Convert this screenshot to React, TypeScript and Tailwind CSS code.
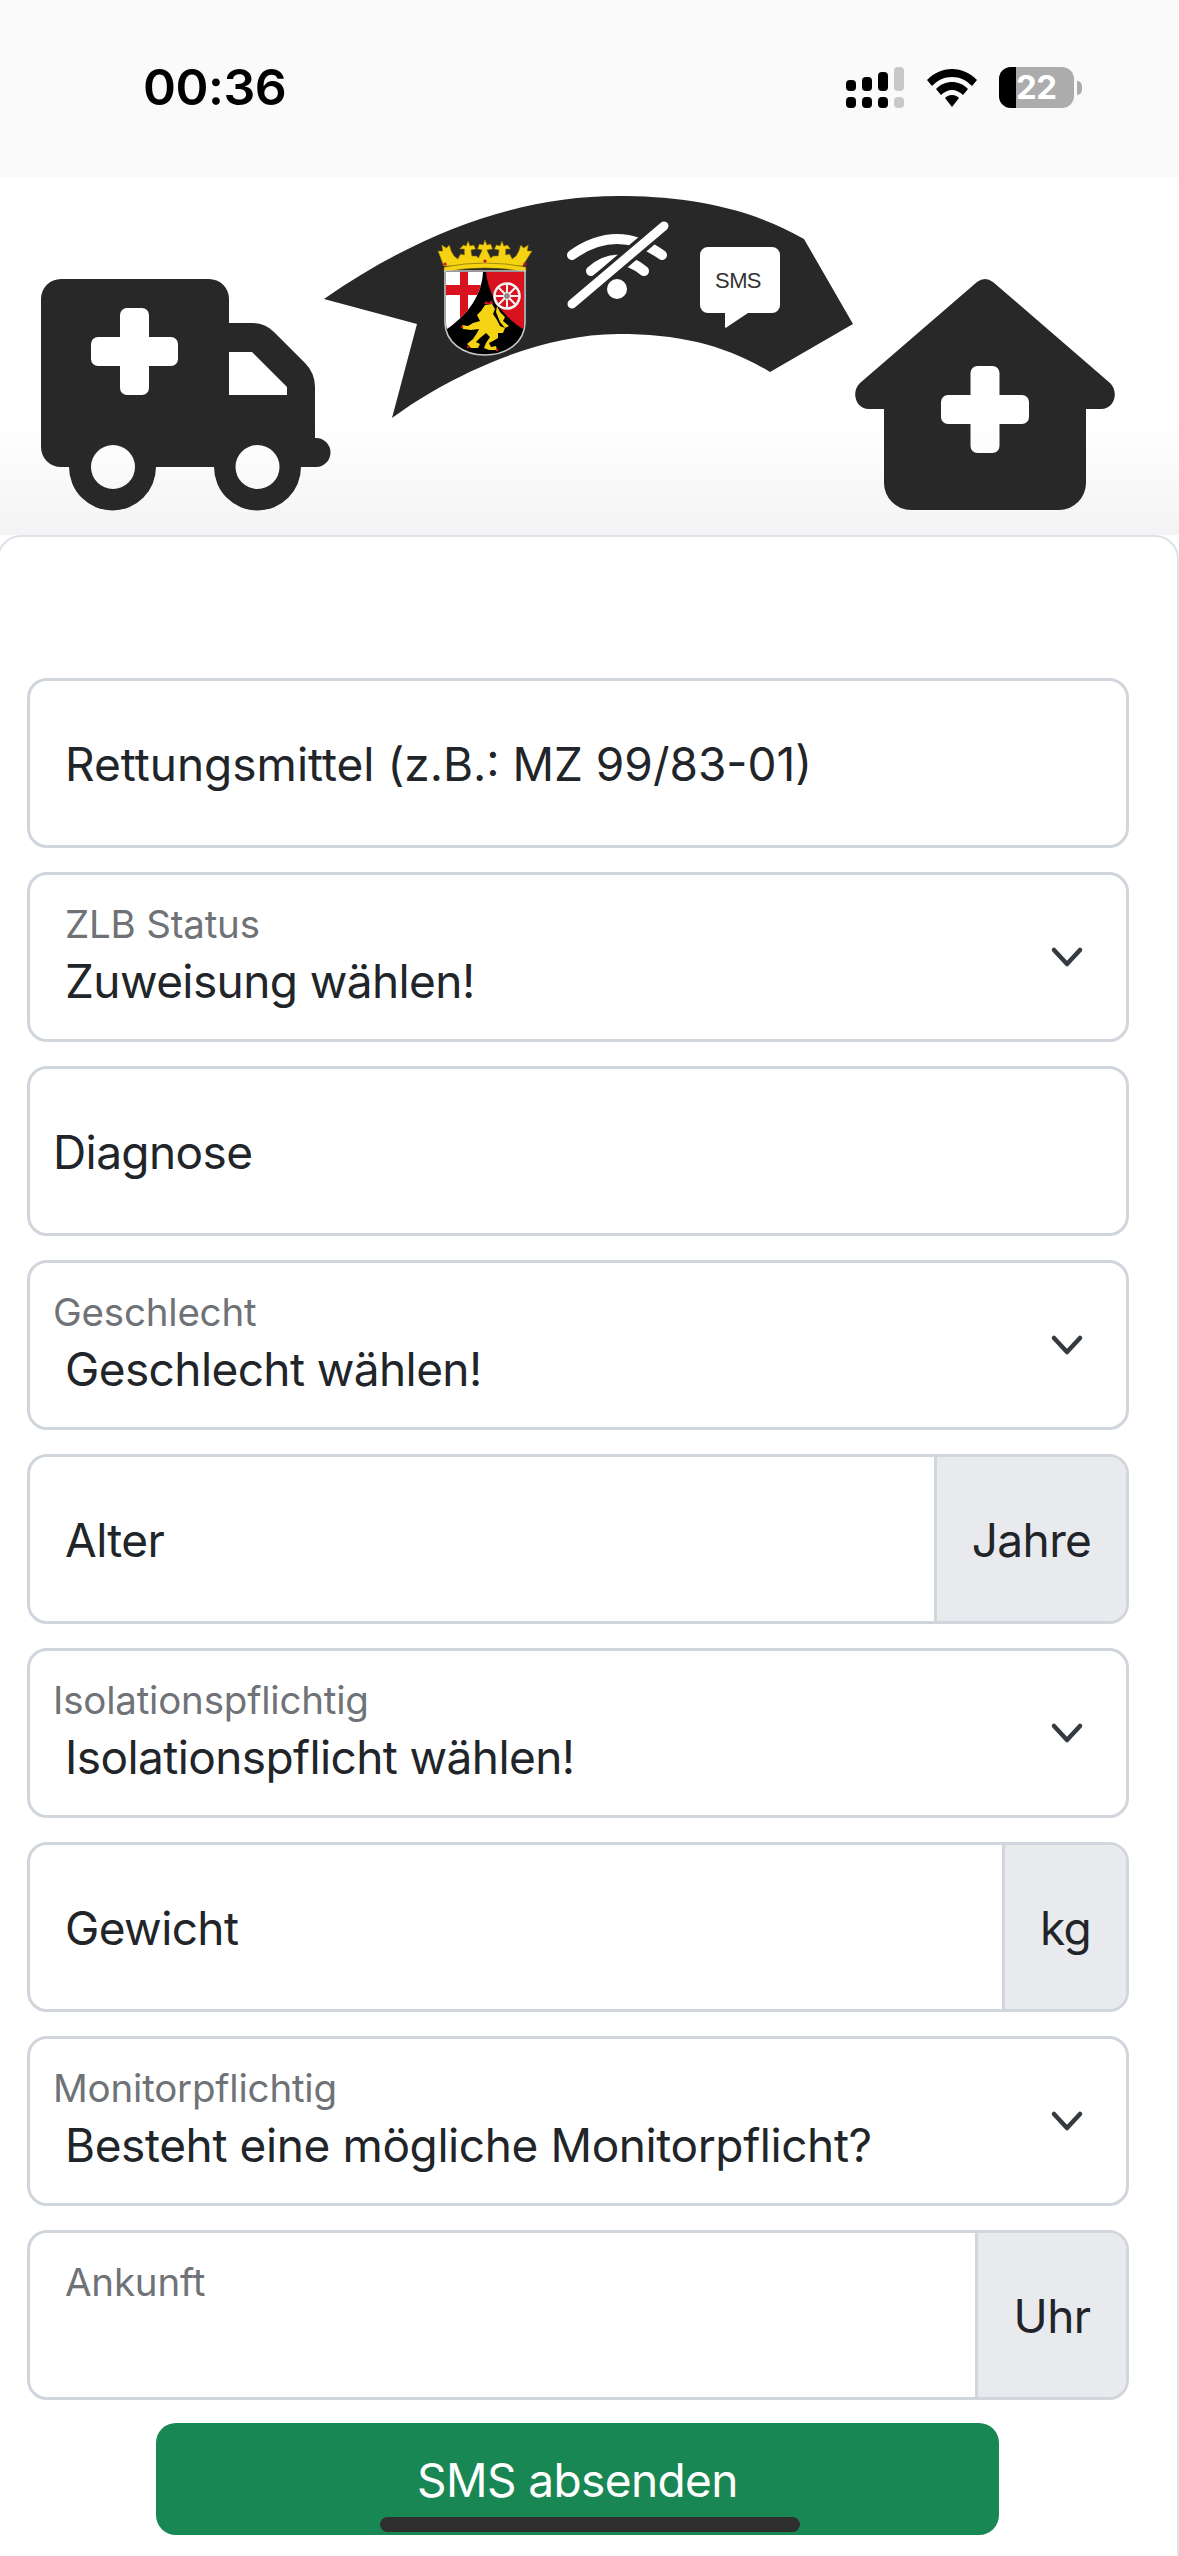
const font = { fontFamily: 'Inter, "Liberation Sans", sans-serif' };

function Chevron() {
  return (
    <svg width="36" height="24" viewBox="0 0 36 24" className="shrink-0" aria-hidden="true">
      <polyline points="5,4 18,18 31,4" transform="translate(0 1)" fill="none" stroke="#343a40" strokeWidth="4.5" strokeLinecap="round" strokeLinejoin="round" />
    </svg>
  );
}

function TextField({ text, x }: { text: string; x: string }) {
  return (
    <div className={`flex h-[170px] items-center rounded-[20px] border-[3px] border-[#d1d5dc] bg-white pt-[3px] text-[#212529] ${x}`}>
      {text}
    </div>
  );
}

function SelectField({ label, value, labelX, valueClass = '' }: { label: string; value: string; labelX: string; valueClass?: string }) {
  return (
    <div className="flex h-[170px] items-center rounded-[20px] border-[3px] border-[#d1d5dc] bg-white pr-[41px]">
      <div className="flex h-full flex-1 flex-col pt-[29px]">
        <span className={`h-[41px] text-[38.5px] leading-[41px] tracking-[-0.2px] text-[#6f7276] ${labelX}`}>{label}</span>
        <span className={`h-[72px] pl-[35px] leading-[72px] text-[#212529] ${valueClass}`}>{value}</span>
      </div>
      <Chevron />
    </div>
  );
}

function AddonField({ text, addon, width, small }: { text: string; addon: string; width: string; small?: boolean }) {
  return (
    <div className="flex h-[170px] overflow-hidden rounded-[20px] border-[3px] border-[#d1d5dc] bg-white text-[#212529]">
      {small ? (
        <div className="flex-1 pl-[35px] pt-[29px] text-[38.5px] leading-[41px] tracking-[-0.2px] text-[#6f7276]">{text}</div>
      ) : (
        <div className="flex flex-1 items-center pl-[35px] pt-[3px]">{text}</div>
      )}
      <div className={`flex items-center justify-center border-l-[3px] border-[#d1d5dc] bg-[#e9eaee] pt-[3px] ${width}`}>{addon}</div>
    </div>
  );
}

function HeaderArt() {
  return (
    <svg width="1179" height="358" viewBox="0 177 1179 358" className="block" aria-hidden="true">
      <defs>
        <clipPath id="white-field">
          <path d="M446 272 H483 C482 293 470 313 447 329 Q446 326 446 322 Z" />
        </clipPath>
      </defs>
      {/* ambulance */}
      <path
        fillRule="evenodd"
        fill="#282828"
        d="M61 279 H209 A20 20 0 0 1 229 299 V323 H253 Q265 323 274 332 L305 363 Q315 373 315 387 V438 H316 A14.5 14.5 0 0 1 316 467 H301 A43.5 43.5 0 0 1 214 467 H156 A43.5 43.5 0 0 1 69 467 H61 A20 20 0 0 1 41 447 V299 A20 20 0 0 1 61 279 Z
        M120 315 A7 7 0 0 1 127 308 H142 A7 7 0 0 1 149 315 V337 H171 A7 7 0 0 1 178 344 V359 A7 7 0 0 1 171 366 H149 V388 A7 7 0 0 1 142 395 H127 A7 7 0 0 1 120 388 V366 H98 A7 7 0 0 1 91 359 V344 A7 7 0 0 1 98 337 H120 Z
        M229 352 H252 L287 387 V395 H229 Z
        M113 445 A22 22 0 1 0 113 489 A22 22 0 1 0 113 445 Z
        M257.5 445 A22 22 0 1 0 257.5 489 A22 22 0 1 0 257.5 445 Z"
      />
      {/* banner */}
      <path
        fill="#282828"
        d="M324 299 L417 324 L392 418 C450 375 540 334 618 334 C680 334 725 345 770 372 L853 324 L804 239 C745 205 680 196 618 196 C520 196 420 232 324 299 Z"
      />
      {/* crown */}
      <path
        fill="#f5d312"
        stroke="#8a6d00"
        strokeWidth="0.6"
        transform="translate(26.3 0) scale(0.94 1)"
        d="M444 266 L438 251 L443 251 L442 245 L447 248 L450 245 L452 251 L455 256 L459 259 L462 254 L466 255 L466 249 L461 249 L465 245 L468 246 L470 241 L472 246 L476 245 L478 249 L473 250 L474 256 L479 256 L481 258 L485 250 L480 249 L482 244 L486 245 L488 240 L490 245 L494 244 L496 249 L490 250 L494 258 L497 256 L502 256 L503 250 L498 249 L500 245 L504 246 L506 241 L508 246 L512 245 L515 249 L510 249 L510 255 L514 254 L517 259 L521 256 L524 251 L526 245 L529 248 L534 245 L533 251 L538 251 L528 266 Z"
      />
      <path d="M444 267 Q485 259 526 267 L526 272 Q485 264 444 272 Z" fill="#f5d312" stroke="#6b5600" strokeWidth="0.6" />
      <circle cx="445" cy="264" r="1.6" fill="#c8102e" />
      <circle cx="485" cy="261" r="1.6" fill="#c8102e" />
      <circle cx="525" cy="264" r="1.6" fill="#c8102e" />
      {/* shield */}
      <path d="M445 271 H525 V322 C525 343 506 355 485 355 C464 355 445 343 445 322 Z" fill="#000" stroke="#c9c9c9" strokeWidth="1.6" />
      <path d="M446 272 H483 C482 293 470 313 447 329 Q446 326 446 322 Z" fill="#fff" />
      <g fill="#d8121f" clipPath="url(#white-field)">
        <rect x="460" y="272" width="8" height="50" />
        <rect x="446" y="285" width="38" height="10" />
      </g>
      <path d="M486 272 H524 V322 Q524 326 523 329 C503 317 488 295 486 272 Z" fill="#d8121f" />
      <g fill="none" stroke="#f2f2f2">
        <circle cx="507" cy="296" r="12.5" strokeWidth="2.6" />
        <path d="M507 283 V309 M494 296 H520 M498 287 L516 305 M516 287 L498 305" strokeWidth="2" />
      </g>
      <circle cx="507" cy="296" r="3.5" fill="#8c8c8c" stroke="#fff" />
      {/* lion */}
      <g fill="#f5d312">
        <path d="M481 311 L485 305 L492 304 L495 309 L493 314 L497 320 L500 326 L505 328 L503 333 L498 333 L498 338 L493 341 L489 343 L491 347 L496 346 L497 350 L489 350 L484 348 L486 343 L490 337 L486 333 L480 338 L476 342 L480 344 L478 348 L471 348 L467 344 L473 339 L477 333 L479 329 L471 330 L463 329 L462 325 L468 326 L473 323 L480 321 L477 315 Z" />
        <path d="M497 306 L500 312 L505 317 L503 321 L509 326 L505 328 L500 322 L496 312 Z" />
      </g>
      <path d="M484 304 L486 301 L489 303 L492 300 L493 304 Z" fill="#d8121f" />
      <circle cx="462" cy="327" r="1.3" fill="#d8121f" />
      <circle cx="468" cy="347" r="1.3" fill="#d8121f" />
      <circle cx="497" cy="350" r="1.3" fill="#d8121f" />
      {/* wifi off */}
      <g fill="none" strokeLinecap="round">
        <path d="M572 255 Q617 223 662 255" stroke="#fff" strokeWidth="10" />
        <path d="M591 271 Q617 249 644 271" stroke="#fff" strokeWidth="10" />
        <path d="M572 304 L664 226" stroke="#282828" strokeWidth="16" strokeLinecap="butt" />
        <path d="M572 304 L664 226" stroke="#fff" strokeWidth="9" />
      </g>
      <circle cx="617" cy="289" r="10" fill="#fff" />
      {/* sms bubble */}
      <path d="M708 247 H772 A8 8 0 0 1 780 255 V305 A8 8 0 0 1 772 313 H748 L727 327 A1 1 0 0 1 725 326 V313 H708 A8 8 0 0 1 700 305 V255 A8 8 0 0 1 708 247 Z" fill="#fff" />
      <text x="738" y="288" textAnchor="middle" fontFamily='"Liberation Sans", sans-serif' fontSize="22" fill="#333">SMS</text>
      {/* house */}
      <path
        fillRule="evenodd"
        fill="#282828"
        d="M977 282 Q985 276 993 282 L1110 383 C1119 391 1115 409 1101 409 H1086 V483 A27 27 0 0 1 1059 510 H911 A27 27 0 0 1 884 483 V409 H869 C855 409 851 391 860 383 Z
        M970.5 373 A7 7 0 0 1 977.5 366 H992.5 A7 7 0 0 1 999.5 373 V395 H1022 A7 7 0 0 1 1029 402 V417 A7 7 0 0 1 1022 424 H999.5 V446 A7 7 0 0 1 992.5 453 H977.5 A7 7 0 0 1 970.5 446 V424 H948 A7 7 0 0 1 941 417 V402 A7 7 0 0 1 948 395 H970.5 Z"
      />
    </svg>
  );
}

function Signal() {
  return (
    <div className="flex gap-[6px]">
      {[
        { h: 'h-[11px]', c: 'bg-black' },
        { h: 'h-[14px]', c: 'bg-black' },
        { h: 'h-[19px]', c: 'bg-black' },
        { h: 'h-[24px]', c: 'bg-[#c8c8c8]' },
      ].map((b, i) => (
        <div key={i} className="flex h-[41px] w-[10px] flex-col justify-end gap-[6px]">
          <div className={`w-[10px] rounded-[4px] ${b.h} ${b.c}`} />
          <div className={`h-[11px] w-[10px] rounded-[4px] ${b.c}`} />
        </div>
      ))}
    </div>
  );
}

function Wifi() {
  return (
    <svg width="50" height="38" viewBox="0 0 50 38" aria-hidden="true">
      <path fill="#000" d="M25 0 C35 0 43 4 50 11 L45 17 C39 11 33 8 25 8 C17 8 11 11 5 17 L0 11 C7 4 15 0 25 0 Z" />
      <path fill="#000" d="M25 13 C31 13 36 15 41 20 L36 26 C33 23 29 21 25 21 C21 21 17 23 14 26 L9 20 C14 15 19 13 25 13 Z" />
      <path fill="#000" d="M25 26 C28 26 30 27 32 29 L25 38 L18 29 C20 27 22 26 25 26 Z" />
    </svg>
  );
}

function Battery() {
  return (
    <div className="flex items-center gap-[3px]">
      <div className="flex h-[41px] w-[75px] rounded-[12px] bg-[#acacac]">
        <div className="h-full w-[17px] rounded-l-[12px] bg-black" />
        <span className="text-[33px] font-bold leading-[41px] tracking-[-0.5px] text-white">22</span>
      </div>
      <div className="h-[14px] w-[5px] rounded-r-full bg-[#acacac]" />
    </div>
  );
}

export default function App() {
  return (
    <div className="relative h-[2556px] w-[1179px] overflow-hidden bg-white text-[46px] tracking-[-0.6px]" style={font}>
      <div className="flex h-[177px] items-start justify-between bg-[#fafafa] pl-[143px] pr-[97px] pt-[67px]">
        <span className="text-[50px] font-semibold leading-[41px] tracking-[-0.5px] text-black">00:36</span>
        <div className="flex items-center gap-[23px]">
          <Signal />
          <Wifi />
          <div className="-ml-[1px]">
            <Battery />
          </div>
        </div>
      </div>

      <div className="h-[358px] bg-gradient-to-b from-white from-[68%] to-[#f4f4f6]">
        <HeaderArt />
      </div>

      <div className="-ml-[3px] h-[2100px] w-[1182px] rounded-t-[24px] border-2 border-[#dfe2e8] bg-white pl-[28px] pr-[48px] pt-[141px]">
        <div className="flex flex-col gap-[24px]">
          <TextField text="Rettungsmittel (z.B.: MZ 99/83-01)" x="pl-[35px] tracking-[0px]" />
          <SelectField label="ZLB Status" value="Zuweisung wählen!" labelX="pl-[35px]" />
          <TextField text="Diagnose" x="pl-[23px]" />
          <SelectField label="Geschlecht" value="Geschlecht wählen!" labelX="pl-[23px]" />
          <AddonField text="Alter" addon="Jahre" width="w-[192px]" />
          <SelectField label="Isolationspflichtig" value="Isolationspflicht wählen!" labelX="pl-[23px]" />
          <AddonField text="Gewicht" addon="kg" width="w-[124px]" />
          <SelectField label="Monitorpflichtig" value="Besteht eine mögliche Monitorpflicht?" labelX="pl-[23px]" valueClass="tracking-[-0.4px]" />
          <AddonField text="Ankunft" addon="Uhr" width="w-[151px]" small />
        </div>
        <div className="ml-[129px] mt-[23px] flex h-[112px] w-[843px] items-center justify-center rounded-[20px] bg-[#198754] pt-[3px] text-white">
          SMS absenden
        </div>
      </div>

      <div className="absolute left-[380px] top-[2517px] h-[15px] w-[420px] rounded-full bg-[#2f2f2f]" />
    </div>
  );
}
